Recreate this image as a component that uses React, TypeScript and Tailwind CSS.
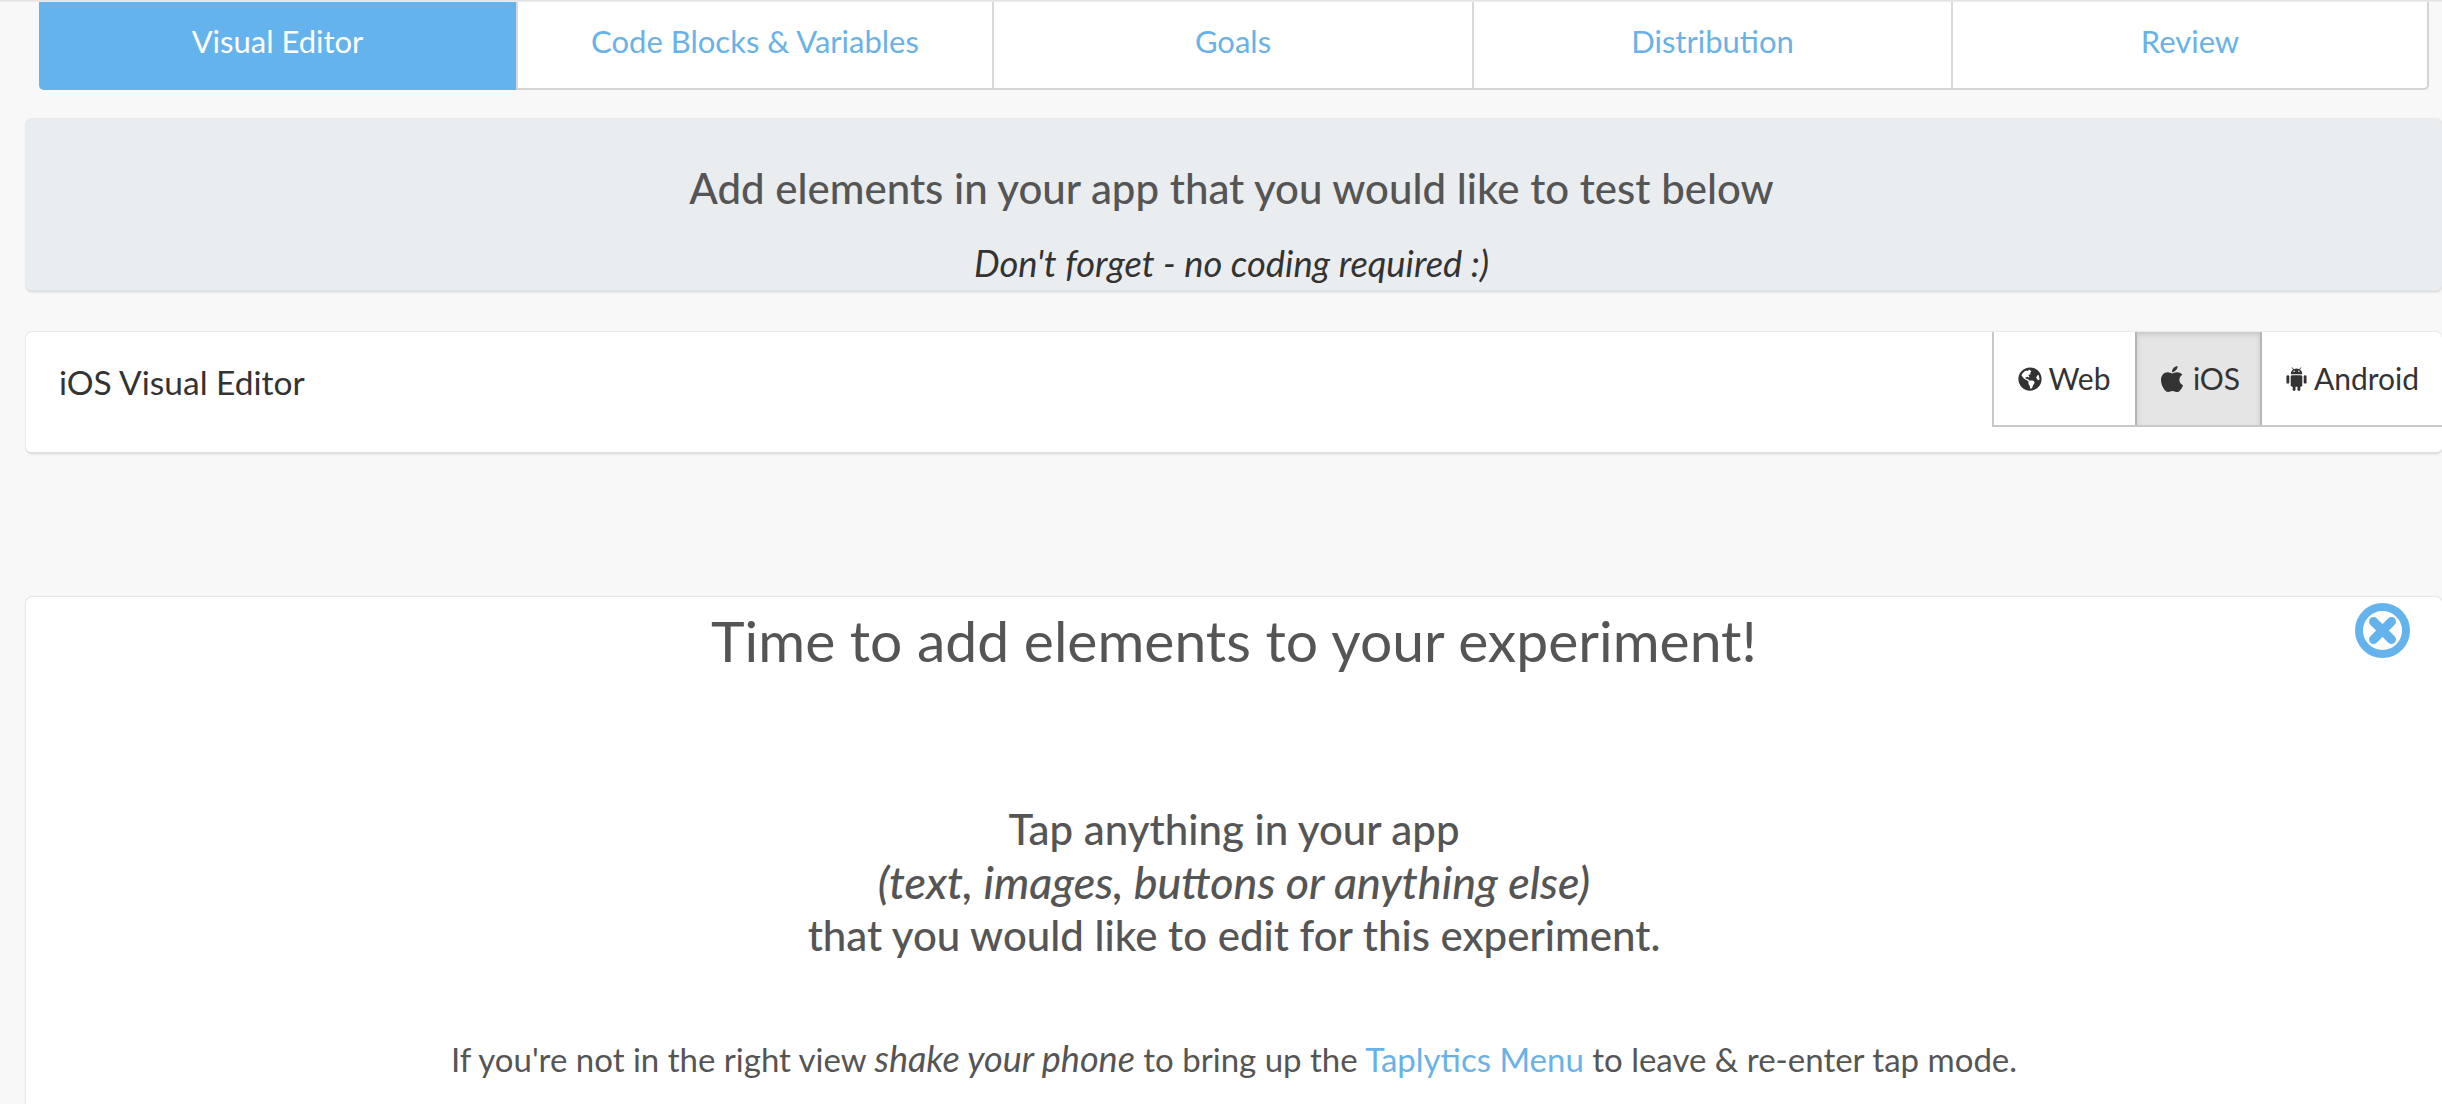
import { FaApple, FaGlobeAmericas } from 'react-icons/fa'

const tabs = ['Visual Editor', 'Code Blocks & Variables', 'Goals', 'Distribution', 'Review']

function AndroidIcon() {
  return (
    <svg viewBox="0 0 24 28" className="h-[27px] w-[23px]" fill="#333">
      <path d="M6 9.5a6 6 0 0 1 12 0z" />
      <path d="M7.5 2.5 9 5M16.5 2.5 15 5" stroke="#333" strokeWidth="1" />
      <rect x="6" y="10.5" width="12" height="12" rx="1.5" />
      <rect x="1.5" y="10.5" width="3" height="9" rx="1.5" />
      <rect x="19.5" y="10.5" width="3" height="9" rx="1.5" />
      <rect x="8" y="20" width="3" height="7" rx="1.5" />
      <rect x="13" y="20" width="3" height="7" rx="1.5" />
      <circle cx="9.5" cy="6.5" r=".8" fill="#fff" />
      <circle cx="14.5" cy="6.5" r=".8" fill="#fff" />
    </svg>
  )
}

function CloseIcon() {
  return (
    <svg viewBox="0 0 55 55" className="h-[55px] w-[55px]">
      <circle cx="27.5" cy="27.5" r="23.5" fill="none" stroke="#65b3ec" strokeWidth="8" />
      <path d="M18.5 18.5 36.500 36.500M36.500 18.500 18.500 36.500" stroke="#65b3ec" strokeWidth="9" strokeLinecap="round" />
    </svg>
  )
}

export default function App() {
  return (
    <div className="h-[1104px] overflow-hidden bg-[#f8f8f8] font-['Lato',sans-serif] text-[#555]">
      <div className="h-[2px] bg-gradient-to-b from-[#e0e0e0] to-[#f0f0f0]" />

      <nav className="ml-[39px] mr-[13px] grid h-[88px] grid-cols-[477px_476px_480px_479px_1fr] rounded-b-[5px] border-b-2 border-r-2 border-[#d4d4d4] bg-white">
        {tabs.map((tab, index) => (
          <div
            key={tab}
            className={
              index === 0
                ? '-mb-[2px] flex justify-center rounded-bl-[5px] bg-[#65b3ec] pt-[21px] text-[31px] leading-[36px] text-white'
                : 'flex justify-center border-l-2 border-[#d9d9d9] pt-[21px] text-[31px] leading-[36px] text-[#69b2e8]'
            }
          >
            {tab}
          </div>
        ))}
      </nav>

      <section className="ml-[26px] mt-[29px] h-[173px] rounded-[6px] border-b-2 border-[#e0e2e4] bg-[#eaedf0] pr-[5px] pt-[46px] text-center shadow-[0_0_2px_rgba(0,0,0,0.2)]">
        <h2 className="text-[42px] font-medium leading-[46px]">Add elements in your app that you would like to test below</h2>
        <p className="mt-[33px] text-[36.300px] italic leading-[38px] text-[#333]">Don't forget - no coding required :)</p>
      </section>

      <section className="ml-[26px] mt-[40px] flex h-[122px] justify-between rounded-[6px] border-b-2 border-[#e0e0e0] bg-white shadow-[0_0_2px_rgba(0,0,0,0.2)]">
        <h3 className="pl-[33px] pt-[32px] text-[33.500px] leading-[36px] text-[#333]">iOS Visual Editor</h3>
        <div className="flex h-[95px] border-b-2 border-l-2 border-[#c8c8c8] text-[30px] text-[#333]">
          <div className="flex w-[141px] items-center justify-center gap-[6px]">
            <FaGlobeAmericas className="text-[24px]" />
            Web
          </div>
          <div className="flex w-[127px] items-center justify-center gap-[6px] border-x-2 border-[#b5b5b5] bg-[#e5e5e5] shadow-[inset_0_3px_5px_rgba(0,0,0,0.12)]">
            <FaApple className="text-[30px]" />
            iOS
          </div>
          <div className="flex w-[180px] items-center justify-center gap-[6px]">
            <AndroidIcon />
            Android
          </div>
        </div>
      </section>

      <section className="ml-[26px] mt-[143px] h-[600px] rounded-t-[6px] bg-white text-center shadow-[0_0_2px_rgba(0,0,0,0.25)]">
        <div className="flex justify-end pr-[32px] pt-[6px]">
          <CloseIcon />
        </div>
        <h1 className="-mt-[52px] text-[57px] leading-[68px]">Time to add elements to your experiment!</h1>
        <div className="mt-[129px] text-[42px] font-medium leading-[53px]">
          <p>Tap anything in your app</p>
          <p className="text-[44.800px] italic">(text, images, buttons or anything else)</p>
          <p>that you would like to edit for this experiment.</p>
        </div>
        <p className="mt-[76px] text-[33px] leading-[40px]">
          If you're not in the right view <em className="text-[36px]">shake your phone</em> to bring up the{' '}
          <span className="text-[#69b2e8]">Taplytics Menu</span> to leave &amp; re-enter tap mode.
        </p>
      </section>
    </div>
  )
}
